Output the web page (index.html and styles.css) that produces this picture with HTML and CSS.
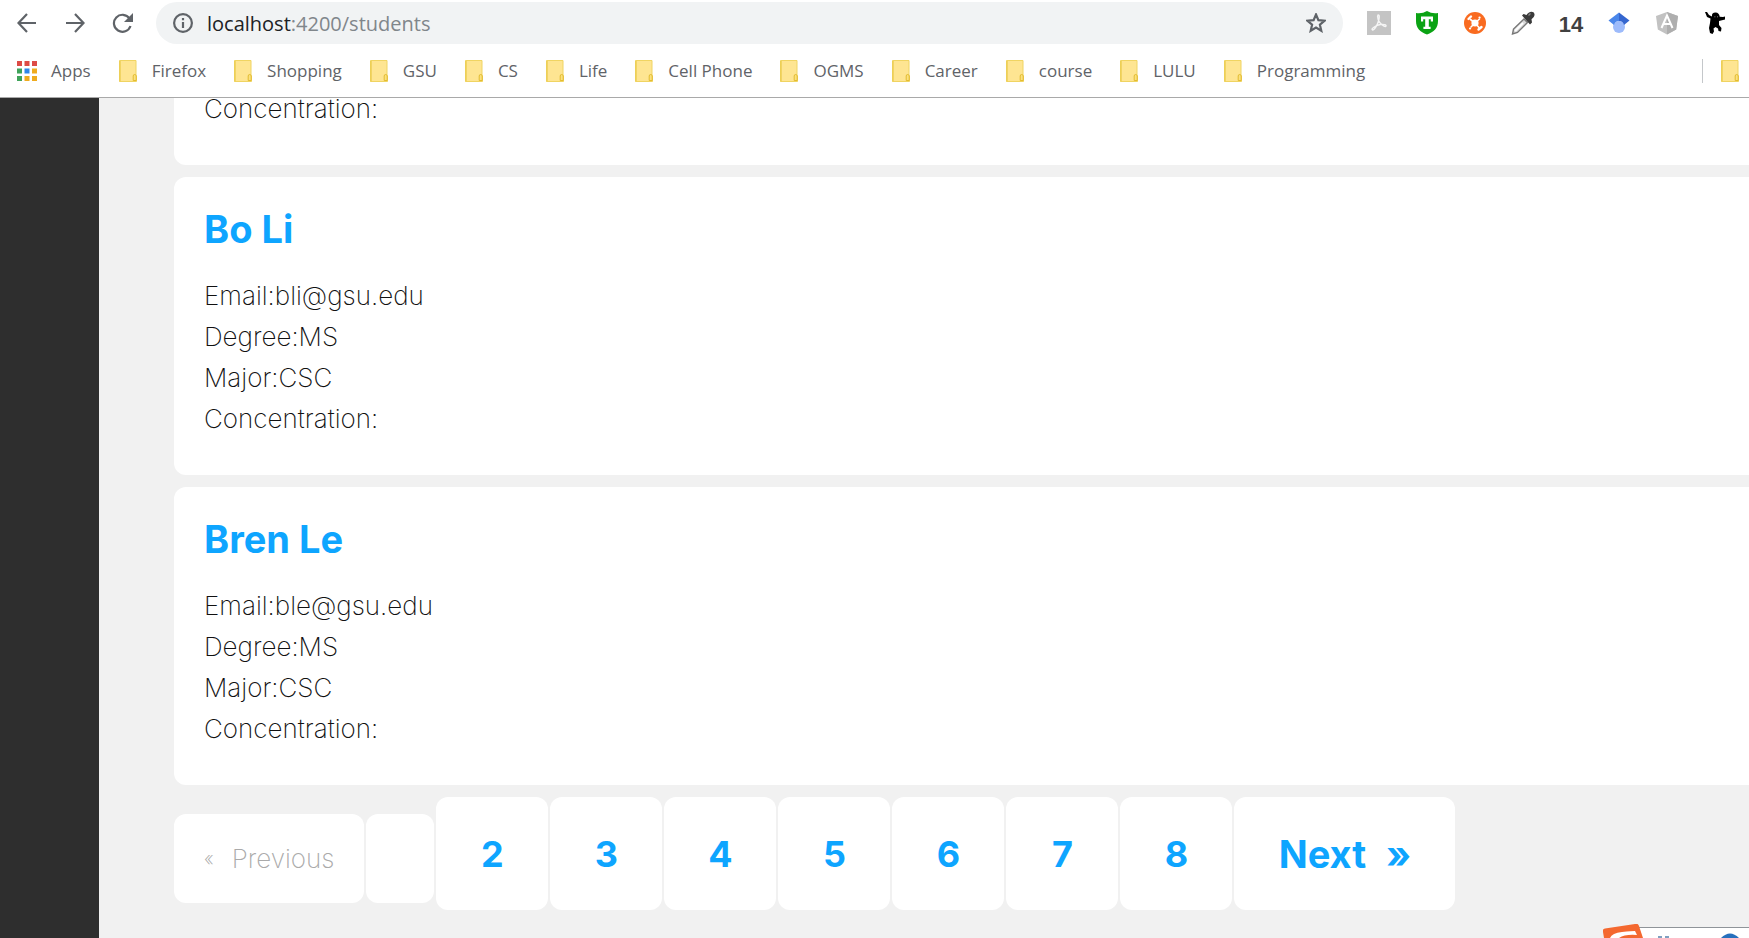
FILE: index.html
```
<!DOCTYPE html>
<html lang="en">
<head>
<meta charset="utf-8">
<title>Students</title>
<link rel="stylesheet" href="styles.css">
</head>
<body>
<svg class="defs" aria-hidden="true">
  <symbol id="folder" viewBox="0 0 18 22">
    <path d="M.5.5h16.5v15.500h.5v5.500H.5z" fill="#fee592" stroke="#f0d462"/>
    <path d="M1 1v20.500" stroke="#edce55" stroke-width="1.500"/>
    <path d="M14.200 20.500v-4.500q0-1.500 1.500-1.500t1.500 1.500v4.500z" fill="#fbe17f" stroke="#e3bc31"/>
  </symbol>
</svg>
<header class="chrome">
  <div class="toolbar">
    <button class="nav" aria-label="Back"><svg width="20" height="20" viewBox="0 0 20 20"><path d="M19 10H2M10 1L1.500 10l8.500 9"/></svg></button>
    <button class="nav" aria-label="Forward"><svg width="20" height="20" viewBox="0 0 20 20"><path d="M1 10h17M10 1l8.500 9L10 19"/></svg></button>
    <button class="nav" aria-label="Reload"><svg width="22" height="20" viewBox="0 0 22 20"><path d="M17.500 5.500A8.500 8.500 0 1 0 18.500 13"/><path class="solid" d="M21 0v9h-9z"/></svg></button>
    <div class="omnibox">
      <button class="site" aria-label="Site information"><svg width="20" height="20" viewBox="0 0 20 20"><circle cx="10" cy="10" r="8.900"/><path d="M10 9v6M10 5v2.200"/></svg></button>
      <div class="url"><span class="host">localhost</span>:4200/students</div>
      <button class="star" aria-label="Bookmark this page"><svg width="20" height="20" viewBox="0 0 20 20"><path d="M10 1.500l2.400 5.700 6.200.5-4.700 4 1.400 6.100-5.300-3.200-5.300 3.200 1.400-6.100-4.700-4 6.200-.5z"/></svg></button>
    </div>
    <div class="extensions">
      <button aria-label="PDF"><svg width="24" height="24" viewBox="0 0 24 24"><path fill="#c4c4c4" d="M0 0h24v24H0z"/><path d="M11 4c1.500-.5 1.500 2 .8 5-.8 3.500-4 10-6.300 10-2-1.200 4-5 8-5.500 3.500-.3 6 .3 5.500 1.500-.8 1.800-6.500-2.500-7.700-6C10.600 6.500 10 5 11 4z" fill="none" stroke="#f5f5f5" stroke-width="1.400"/></svg></button>
      <button aria-label="Shield"><svg width="24" height="24" viewBox="0 0 24 24"><path fill="#0ba314" d="M1 2q6 1 11-2 5 3 11 2v8c0 7-4 11-11 13.500C5 21 1 17 1 10z"/><path fill="#fff" d="M6 5.500h12v5h-2.200V8.200h-2v7.600h1.800V18H8.400v-2.200h1.800V8.200h-2v2.300H6z"/></svg></button>
      <button aria-label="Network"><svg width="24" height="24" viewBox="0 0 24 24"><circle cx="12" cy="12" r="11" fill="#f96b20"/><circle cx="12" cy="12" r="3.600" fill="#fff"/><path d="M12 12L7.500 8.500M12 12l4.500-4M12 12l4 4.500M12 12l-4 4" stroke="#fff" stroke-width="1.600" stroke-linecap="round"/><path d="M5.500 8l2.500-2.500M15.500 18.500l3-2.500" stroke="#fff" stroke-width="2.400" stroke-linecap="round"/><path d="M16.500 6.500h.1M7 17.500h.1" stroke="#fff" stroke-width="2.200" stroke-linecap="round"/></svg></button>
      <button aria-label="Colour picker"><svg width="24" height="24" viewBox="0 0 24 24"><path d="M13 8l3.500 3.500L6.500 21.500 1.500 23l1-5z" fill="#d9d9d9" stroke="#777" stroke-width="1.400"/><path d="M4 20l8-8" stroke="#fff" stroke-width="2"/><path d="M11 4.500l1.500-1.500 3 1C17 1.500 20-.3 22.500 1.200c2 2 1 5-2 7l.5 3.300-2 2z" fill="#3b3b3b"/><path d="M17.500 4.500l2-2" stroke="#8a8a8a" stroke-width="1.200"/></svg></button>
      <button class="count" aria-label="Calendar, 14">14</button>
      <button aria-label="Scholar"><svg width="24" height="24" viewBox="0 0 24 24"><circle cx="12" cy="16" r="6" fill="#9dbbfb"/><path fill="#4a86ea" d="M12 1.500L1.500 9.500 7 14q1-4 5-4z"/><path fill="#3566cf" d="M12 1.500l10.500 8L17 14q-1-4-5-4z"/></svg></button>
      <button aria-label="Angular"><svg width="24" height="24" viewBox="0 0 24 24"><path fill="#c2c2c2" d="M12 1l11 4-1.800 13.500L12 23.500l-9.200-5L1 5z"/><path fill="#aeaeae" d="M12 1l11 4-1.800 13.500-9.200 5z"/><path d="M6.500 17L12 4.500 17.500 17M8.500 13h7" fill="none" stroke="#fff" stroke-width="2"/></svg></button>
      <button aria-label="Figure"><svg width="24" height="24" viewBox="0 0 24 24"><path d="M2 1l2 0 2 3 3 1.500C8.500 3 10 1.500 12.500 1.500s4 2 4.200 4.200l3.300.3L22 5.500v3l-3 .7-3 .8 0 4 2.500 3-.5 3.500-2.500-.5-.5-2.500-2.500-1.500-2 1.500.5 3-1.500 2.500-2.500-1-1-5 1-5 .5-4.500L4 6z"/><path d="M11.500 5.800h.8M14 5.800h.8" stroke="#999"/></svg></button>
    </div>
  </div>
  <nav class="bookmarks">
    <a class="apps" href="#"><svg width="20" height="20" viewBox="0 0 20 20"><path fill="#dd4b46" d="M0 0h5v5H0zM7.500 0h5v5h-5zM15 0h5v5h-5z"/><path fill="#3fa35a" d="M0 7.500h5v5H0zM0 15h5v5H0z"/><path fill="#2f86e8" d="M7.500 7.500h5v5h-5z"/><path fill="#efab1e" d="M15 7.500h5v5h-5zM7.500 15h5v5h-5zM15 15h5v5h-5z"/></svg>Apps</a>
    <a href="#"><svg width="18" height="22"><use href="#folder"/></svg>Firefox</a>
    <a href="#"><svg width="18" height="22"><use href="#folder"/></svg>Shopping</a>
    <a href="#"><svg width="18" height="22"><use href="#folder"/></svg>GSU</a>
    <a href="#"><svg width="18" height="22"><use href="#folder"/></svg>CS</a>
    <a href="#"><svg width="18" height="22"><use href="#folder"/></svg>Life</a>
    <a href="#"><svg width="18" height="22"><use href="#folder"/></svg>Cell Phone</a>
    <a href="#"><svg width="18" height="22"><use href="#folder"/></svg>OGMS</a>
    <a href="#"><svg width="18" height="22"><use href="#folder"/></svg>Career</a>
    <a href="#"><svg width="18" height="22"><use href="#folder"/></svg>course</a>
    <a href="#"><svg width="18" height="22"><use href="#folder"/></svg>LULU</a>
    <a href="#"><svg width="18" height="22"><use href="#folder"/></svg>Programming</a>
    <a class="other" href="#" aria-label="Other bookmarks"><svg width="18" height="22"><use href="#folder"/></svg></a>
  </nav>
</header>
<div class="page">
  <aside class="sidebar"></aside>
  <main class="content">
    <article class="card card-cut">
      <p>Concentration:</p>
    </article>
    <article class="card">
      <h2><a href="#">Bo Li</a></h2>
      <p>Email:bli@gsu.edu</p>
      <p>Degree:MS</p>
      <p>Major:CSC</p>
      <p>Concentration:</p>
    </article>
    <article class="card">
      <h2><a href="#">Bren Le</a></h2>
      <p>Email:ble@gsu.edu</p>
      <p>Degree:MS</p>
      <p>Major:CSC</p>
      <p>Concentration:</p>
    </article>
    <ul class="pager">
      <li class="previous"><span class="arrow">«</span><span>Previous</span></li>
      <li class="current"></li>
      <li><a href="#">2</a></li>
      <li><a href="#">3</a></li>
      <li><a href="#">4</a></li>
      <li><a href="#">5</a></li>
      <li><a href="#">6</a></li>
      <li><a href="#">7</a></li>
      <li><a href="#">8</a></li>
      <li><a class="next" href="#"><span>Next</span><span>»</span></a></li>
    </ul>
  </main>
  <div class="ime"><svg width="146" height="14" viewBox="0 0 146 14"><path fill="#fff" d="M36 3h110v11H36z"/><path d="M36 3.500h110" stroke="#8f9499"/><path fill="#f4682f" d="M0 8q-1-3 2-3.500L32 0q3-1 4 2l4 12H1z"/><path d="M7 14q2-5 12-6t13-1l2 4q-12-1-18 3z" fill="#fff"/><path d="M55 13h4M62 13h4" stroke="#7f9fc0" stroke-width="2"/><path d="M118 14q9-9 18 0z" fill="#2670bd"/></svg></div>
</div>
</body>
</html>
```
FILE: styles.css
```
* { box-sizing: border-box; }
body {
  margin: 0;
  height: 100vh;
  display: flex;
  flex-direction: column;
  overflow: hidden;
  background: #f1f1f1;
  font-family: Inter, "Open Sans", sans-serif;
}
a { color: inherit; text-decoration: none; }
button {
  border: 0;
  padding: 0;
  background: none;
  display: flex;
  align-items: center;
  justify-content: center;
}
svg { display: block; flex: none; }
.defs { position: absolute; width: 0; height: 0; }

.chrome {
  flex: none;
  background: #fff;
  border-bottom: 1px solid #a9a9a9;
  font-family: "Open Sans", "Noto Sans", sans-serif;
  color: #5f6368;
}
.toolbar {
  display: flex;
  align-items: center;
  height: 46px;
  padding: 0 10px 0 3px;
}
.nav { width: 48px; height: 42px; }
.nav svg, .site svg, .star svg {
  fill: none;
  stroke: #5f6368;
  stroke-width: 2.2;
}
.nav .solid { fill: #5f6368; stroke: none; }
.omnibox {
  flex: 1;
  display: flex;
  align-items: center;
  gap: 14px;
  height: 42px;
  margin-left: 9px;
  padding: 0 17px;
  border-radius: 21px;
  background: #f1f3f4;
}
.url {
  flex: 1;
  padding-top: 2px;
  font-size: 20px;
  line-height: 28px;
  color: #80868b;
}
.host { color: #202124; }
.extensions {
  display: flex;
  margin-left: 12px;
}
.extensions button { width: 48px; height: 42px; }
.extensions .count {
  padding-top: 3px;
  font: bold 22px "Liberation Sans", sans-serif;
  color: #404040;
}
.bookmarks {
  display: flex;
  align-items: center;
  gap: 28px;
  height: 51px;
  padding: 0 10px 2px 17px;
  font-size: 17px;
  line-height: 24px;
}
.bookmarks a {
  display: flex;
  align-items: center;
  gap: 15px;
  height: 24px;
}
.bookmarks .apps { gap: 14px; }
.bookmarks .other {
  margin-left: auto;
  padding-left: 18px;
  border-left: 1px solid #c4c7ca;
}

.page {
  position: relative;
  flex: 1;
  display: flex;
  min-height: 0;
  overflow: hidden;
}
.sidebar {
  flex: none;
  width: 99px;
  background: #2e2e2e;
}
.content {
  flex: 1;
  display: flex;
  flex-direction: column;
  gap: 12px;
  padding-left: 75px;
}
.card {
  flex: none;
  padding: 30px 30px 36px;
  border-radius: 12px 0 0 12px;
  background: #fff;
  color: #111;
}
.card.card-cut {
  padding-top: 0;
  padding-bottom: 46px;
  border-radius: 0 0 0 12px;
}
.card h2 {
  margin: 0 0 24px;
  font-size: 38px;
  line-height: 44px;
  font-weight: 700;
  color: #0ea5ff;
}
.card p {
  margin: 0;
  font-size: 26px;
  line-height: 41px;
  font-weight: 200;
}
.card-cut p { line-height: 21px; }
.pager {
  display: flex;
  align-items: center;
  gap: 2px;
  margin: 0;
  padding: 0;
  list-style: none;
}
.pager a {
  display: flex;
  align-items: center;
  justify-content: center;
  gap: 20px;
  min-width: 112px;
  height: 113px;
  border-radius: 12px;
  background: #fff;
  font-size: 36px;
  font-weight: 700;
  color: #0ea5ff;
}
.pager .next {
  min-width: 221px;
  font-size: 38px;
}
.previous, .current {
  display: flex;
  align-items: center;
  gap: 18px;
  height: 89px;
  margin-top: 10px;
  padding: 0 30px;
  border-radius: 12px;
  background: #fff;
  font-size: 26px;
  font-weight: 200;
  color: #aaa;
}
.previous { min-width: 190px; }
.current { min-width: 68px; }
.arrow { font-size: 20px; }
.ime {
  position: absolute;
  right: 0;
  bottom: 0;
}
```
